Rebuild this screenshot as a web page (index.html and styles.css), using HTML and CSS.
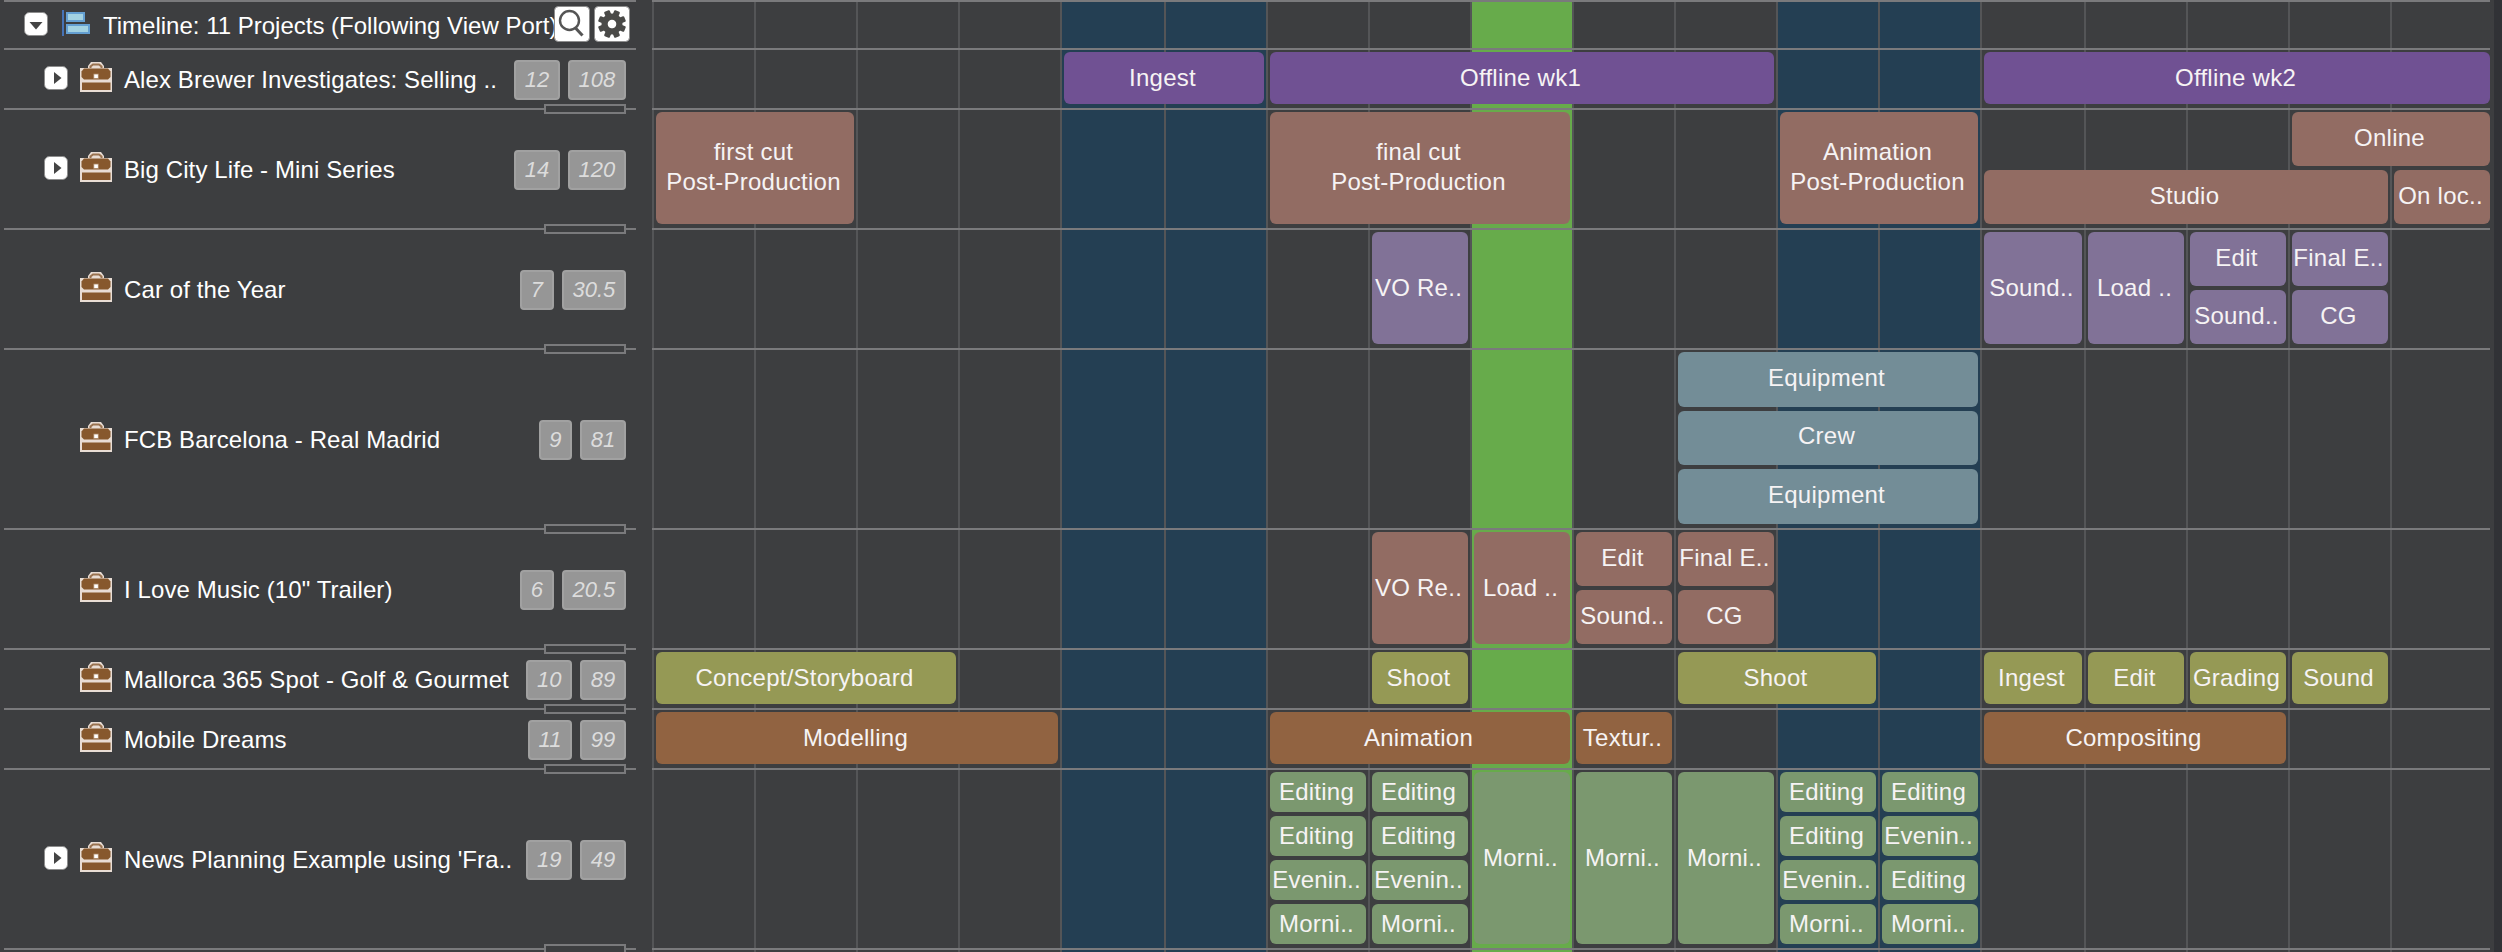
FILE: index.html
```html
<!DOCTYPE html>
<html lang="en">
<head>
  <meta charset="UTF-8">
  <meta name="viewport" content="width=device-width, initial-scale=1.0">
  <title>Project Timeline</title>
  <link rel="stylesheet" href="styles.css">
</head>
<body>
  <svg class="defs">
    <symbol id="briefcase" viewBox="0 0 32 30">
      <path d="M0 6h8V4l3-4h10l3 4v2h8v24H0z" fill="#e9ddd4"/>
      <path d="M10.500 6V4.500L13 2.500h6l2.500 2V6" fill="none" stroke="#9a7350" stroke-width="2"/>
      <path d="M4 6.500h24l2.500 3V15L28 17.500H4L1.500 15V9.500z" fill="#87582d"/>
      <path d="M2 20.500h28.500V28H2z" fill="#87582d"/>
      <rect x="13.800" y="12" width="4.500" height="4.500" fill="#fff" stroke="#a98360" stroke-width=".8"/>
    </symbol>
    <symbol id="closed" viewBox="0 0 24 24">
      <rect x=".5" y=".5" width="23" height="23" rx="5" fill="#fff" stroke="#8d8d8d"/>
      <path d="M10 6l7.500 6-7.500 6z" fill="#444"/>
    </symbol>
    <symbol id="open" viewBox="0 0 24 24">
      <rect x=".5" y=".5" width="23" height="23" rx="5" fill="#fff" stroke="#8d8d8d"/>
      <path d="M5.500 10h13L12 17.500z" fill="#444"/>
    </symbol>
  </svg>

  <div class="timeline">
    <div class="days">
      <i></i><i></i><i></i><i></i><i class="weekend"></i><i class="weekend"></i>
      <i></i><i></i><i class="today"></i><i></i><i></i><i class="weekend"></i><i class="weekend"></i>
      <i></i><i></i><i></i><i></i><i></i>
    </div>

    <div class="row head">
      <div class="project">
        <svg class="toggle"><use href="#open"/></svg>
        <svg class="chart-icon" viewBox="0 0 28 26">
          <rect width="2" height="26" fill="#4672b5"/>
          <rect x="5" y="3" width="17" height="8" fill="#a3d2e2" stroke="#649fd2" stroke-width="2"/>
          <rect x="5" y="15" width="22" height="8" fill="#a3d2e2" stroke="#649fd2" stroke-width="2"/>
        </svg>
        <span class="name">Timeline: 11 Projects (Following View Port)</span>
        <div class="tools">
          <svg viewBox="0 0 36 36">
            <rect x=".5" y=".5" width="35" height="35" rx="4" fill="#fff" stroke="#8d8d8d"/>
            <circle cx="15.500" cy="14.500" r="9.500" fill="none" stroke="#555" stroke-width="2.400"/>
            <path d="M21 21.500l7.500 8" stroke="#555" stroke-width="3"/>
          </svg>
          <svg viewBox="0 0 36 36">
            <rect x=".5" y=".5" width="35" height="35" rx="4" fill="#fff" stroke="#8d8d8d"/>
            <g fill="#4a4a48" transform="translate(18 18) rotate(22.500)">
              <rect x="-3" y="-14" width="6" height="28" rx="1"/>
              <rect x="-3" y="-14" width="6" height="28" rx="1" transform="rotate(45)"/>
              <rect x="-3" y="-14" width="6" height="28" rx="1" transform="rotate(90)"/>
              <rect x="-3" y="-14" width="6" height="28" rx="1" transform="rotate(135)"/>
              <circle r="10.500"/>
              <circle r="4.300" fill="#fff"/>
            </g>
          </svg>
        </div>
      </div>
      <div class="lane"></div>
    </div>

    <div class="row h1 first">
      <div class="project">
        <svg class="toggle"><use href="#closed"/></svg>
        <svg class="case"><use href="#briefcase"/></svg>
        <span class="name">Alex Brewer Investigates: Selling ..</span>
        <span class="badge">12</span><span class="badge">108</span>
      </div>
      <div class="lane">
        <div class="bar purple d5 w2">Ingest</div>
        <div class="bar purple d7 w5">Offline wk1</div>
        <div class="bar purple d14 w5">Offline wk2</div>
      </div>
    </div>

    <div class="row h2">
      <div class="project">
        <svg class="toggle"><use href="#closed"/></svg>
        <svg class="case"><use href="#briefcase"/></svg>
        <span class="name">Big City Life - Mini Series</span>
        <span class="badge">14</span><span class="badge">120</span>
      </div>
      <div class="lane split2">
        <div class="bar brown lines d1 w2">first cut<br>Post-Production</div>
        <div class="bar brown lines d7 w3">final cut<br>Post-Production</div>
        <div class="bar brown lines d12 w2">Animation<br>Post-Production</div>
        <div class="bar brown d17 w2 r1">Online</div>
        <div class="bar brown d14 w4 r2">Studio</div>
        <div class="bar brown d18 r2">On loc..</div>
      </div>
    </div>

    <div class="row h2">
      <div class="project">
        <svg class="case"><use href="#briefcase"/></svg>
        <span class="name">Car of the Year</span>
        <span class="badge">7</span><span class="badge">30.5</span>
      </div>
      <div class="lane split2">
        <div class="bar lavender d8">VO Re..</div>
        <div class="bar lavender d14">Sound..</div>
        <div class="bar lavender d15">Load ..</div>
        <div class="bar lavender d16 r1">Edit</div>
        <div class="bar lavender d16 r2">Sound..</div>
        <div class="bar lavender d17 r1">Final E..</div>
        <div class="bar lavender d17 r2">CG</div>
      </div>
    </div>

    <div class="row h3">
      <div class="project">
        <svg class="case"><use href="#briefcase"/></svg>
        <span class="name">FCB Barcelona - Real Madrid</span>
        <span class="badge">9</span><span class="badge">81</span>
      </div>
      <div class="lane split3">
        <div class="bar teal d11 w3 r1">Equipment</div>
        <div class="bar teal d11 w3 r2">Crew</div>
        <div class="bar teal d11 w3 r3">Equipment</div>
      </div>
    </div>

    <div class="row h2">
      <div class="project">
        <svg class="case"><use href="#briefcase"/></svg>
        <span class="name">I Love Music (10" Trailer)</span>
        <span class="badge">6</span><span class="badge">20.5</span>
      </div>
      <div class="lane split2">
        <div class="bar brown d8">VO Re..</div>
        <div class="bar brown d9">Load ..</div>
        <div class="bar brown d10 r1">Edit</div>
        <div class="bar brown d10 r2">Sound..</div>
        <div class="bar brown d11 r1">Final E..</div>
        <div class="bar brown d11 r2">CG</div>
      </div>
    </div>

    <div class="row h1">
      <div class="project">
        <svg class="case"><use href="#briefcase"/></svg>
        <span class="name">Mallorca 365 Spot - Golf &amp; Gourmet</span>
        <span class="badge">10</span><span class="badge">89</span>
      </div>
      <div class="lane">
        <div class="bar olive d1 w3">Concept/Storyboard</div>
        <div class="bar olive d8">Shoot</div>
        <div class="bar olive d11 w2">Shoot</div>
        <div class="bar olive d14">Ingest</div>
        <div class="bar olive d15">Edit</div>
        <div class="bar olive d16">Grading</div>
        <div class="bar olive d17">Sound</div>
      </div>
    </div>

    <div class="row h1">
      <div class="project">
        <svg class="case"><use href="#briefcase"/></svg>
        <span class="name">Mobile Dreams</span>
        <span class="badge">11</span><span class="badge">99</span>
      </div>
      <div class="lane">
        <div class="bar orange d1 w4">Modelling</div>
        <div class="bar orange d7 w3">Animation</div>
        <div class="bar orange d10">Textur..</div>
        <div class="bar orange d14 w3">Compositing</div>
      </div>
    </div>

    <div class="row h3">
      <div class="project">
        <svg class="toggle"><use href="#closed"/></svg>
        <svg class="case"><use href="#briefcase"/></svg>
        <span class="name">News Planning Example using 'Fra..</span>
        <span class="badge">19</span><span class="badge">49</span>
      </div>
      <div class="lane split4">
        <div class="bar green d7 r1">Editing</div>
        <div class="bar green d7 r2">Editing</div>
        <div class="bar green d7 r3">Evenin..</div>
        <div class="bar green d7 r4">Morni..</div>
        <div class="bar green d8 r1">Editing</div>
        <div class="bar green d8 r2">Editing</div>
        <div class="bar green d8 r3">Evenin..</div>
        <div class="bar green d8 r4">Morni..</div>
        <div class="bar green d9">Morni..</div>
        <div class="bar green d10">Morni..</div>
        <div class="bar green d11">Morni..</div>
        <div class="bar green d12 r1">Editing</div>
        <div class="bar green d12 r2">Editing</div>
        <div class="bar green d12 r3">Evenin..</div>
        <div class="bar green d12 r4">Morni..</div>
        <div class="bar green d13 r1">Editing</div>
        <div class="bar green d13 r2">Evenin..</div>
        <div class="bar green d13 r3">Editing</div>
        <div class="bar green d13 r4">Morni..</div>
      </div>
    </div>

    <div class="row last">
      <div class="project"></div>
      <div class="lane"></div>
    </div>
  </div>
</body>
</html>
```
FILE: styles.css
```css
* {
  box-sizing: border-box;
}
body {
  margin: 0;
  background: #3d3e40;
  color: #fff;
  font-family: "Liberation Sans", Arial, sans-serif;
  font-size: 24px;
  line-height: 30px;
}
.defs {
  position: absolute;
  width: 0;
  height: 0;
}
.timeline {
  position: relative;
  height: 952px;
  overflow: hidden;
  padding-left: 4px;
  border-right: 8px solid #313236;
}

/* day columns, shared by the background and the lanes */
.days, .lane {
  display: grid;
  grid-template-columns: repeat(4, 102px) 104px repeat(8, 102px) 104px repeat(4, 102px);
}
.days {
  position: absolute;
  top: 0;
  left: 652px;
  height: 100%;
}
.days i {
  border-left: 2px solid #545557;
}
.days .weekend {
  background: #243f53;
}
.days .today {
  background: #67ab4b;
}

.row {
  position: relative;
  display: flex;
  gap: 16px;
}
.head {
  height: 48px;
}
.h1 {
  height: 60px;
}
.h2 {
  height: 120px;
}
.h3 {
  height: 180px;
}
.last {
  height: 4px;
}

/* left side */
.project {
  position: relative;
  display: flex;
  align-items: center;
  width: 632px;
  padding: 0 10px 0 76px;
  border-top: 2px solid #7a7a7c;
}
.project::after {
  content: "";
  position: absolute;
  top: -6px;
  right: 10px;
  width: 78px;
  height: 6px;
  border: 2px solid #7a7a7c;
  background: #3d3e40;
}
.head .project::after, .first .project::after {
  display: none;
}
.head .project {
  padding-left: 20px;
}
.project svg, .badge {
  flex-shrink: 0;
}
.toggle {
  width: 24px;
  height: 24px;
  margin: 0 12px 2px -36px;
}
.head .toggle {
  margin: 0 14px 2px 0;
}
.chart-icon {
  width: 28px;
  height: 26px;
  margin: 0 13px 4px 0;
}
.case {
  width: 32px;
  height: 30px;
  margin: 0 12px 4px 0;
}
.name {
  flex: 1;
  min-width: 0;
  padding-top: 1px;
  letter-spacing: 0.1px;
  white-space: nowrap;
}
.head .name {
  letter-spacing: 0;
}
.badge {
  height: 40px;
  margin: 2px 0 0 8px;
  padding: 0 8.7px;
  border: 2px solid #a1a1a1;
  border-radius: 4px;
  background: #969696;
  color: #dcdcdc;
  font-size: 22px;
  font-style: italic;
  line-height: 36px;
}
.tools {
  position: absolute;
  top: 4px;
  right: 6px;
  display: flex;
  gap: 4px;
}
.tools svg {
  width: 36px;
  height: 36px;
}

/* right side */
.lane {
  grid-template-rows: 1fr;
  row-gap: 4px;
  width: 1838px;
  padding: 2px 0 4px;
  border-top: 2px solid #7a7a7c;
}
.split2 {
  grid-template-rows: repeat(2, 1fr);
}
.split3 {
  grid-template-rows: repeat(3, 1fr);
}
.split4 {
  grid-template-rows: repeat(4, 1fr);
}
.bar {
  grid-row: 1 / -1;
  display: flex;
  align-items: center;
  justify-content: center;
  min-width: 0;
  min-height: 0;
  margin: 0 2px 0 4px;
  padding-right: 3px;
  border-radius: 6px;
  color: #f6f3f4;
  letter-spacing: 0.25px;
  text-align: center;
  white-space: nowrap;
}
.lines, .split2 .r1, .split2 .r2, .split3 .bar {
  padding-bottom: 3px;
}
.r1 { grid-row: 1; }
.r2 { grid-row: 2; }
.r3 { grid-row: 3; }
.r4 { grid-row: 4; }

.d1 { grid-column-start: 1; }
.d5 { grid-column-start: 5; }
.d7 { grid-column-start: 7; }
.d8 { grid-column-start: 8; }
.d9 { grid-column-start: 9; }
.d10 { grid-column-start: 10; }
.d11 { grid-column-start: 11; }
.d12 { grid-column-start: 12; }
.d13 { grid-column-start: 13; }
.d14 { grid-column-start: 14; }
.d15 { grid-column-start: 15; }
.d16 { grid-column-start: 16; }
.d17 { grid-column-start: 17; }
.d18 { grid-column-start: 18; }

.w2 { grid-column-end: span 2; }
.w3 { grid-column-end: span 3; }
.w4 { grid-column-end: span 4; }
.w5 { grid-column-end: span 5; }

.purple { background: #705193; }
.brown { background: #926c63; }
.lavender { background: #817297; }
.teal { background: #738d97; }
.olive { background: #959955; }
.orange { background: #916341; }
.green { background: #7b986f; }
```
